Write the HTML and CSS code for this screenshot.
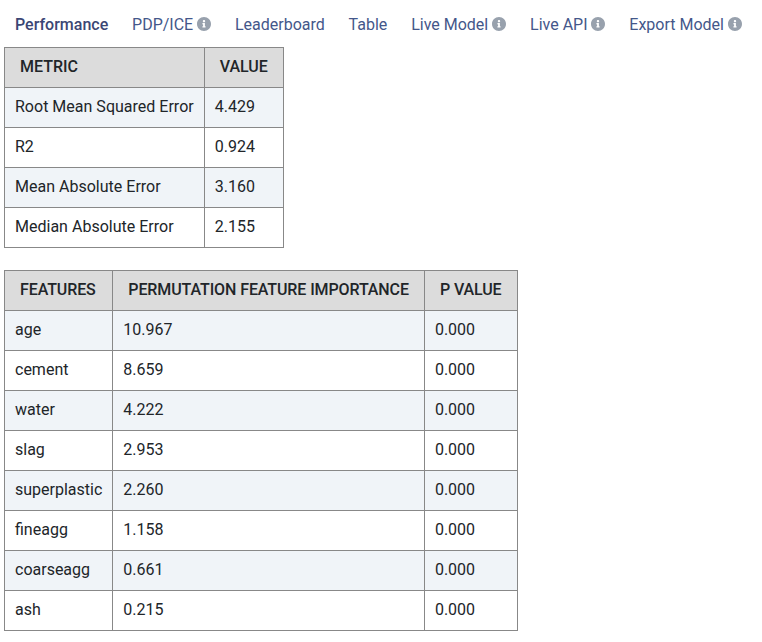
FILE: index.html
```html
<!DOCTYPE html>
<html>
<head>
    <title>Performance</title>
    <link rel="stylesheet" href="styles.css">
</head>
<body>
    <svg class="defs" width="0" height="0">
        <symbol id="info" viewBox="8 8 496 496">
            <path d="M256 8C119 8 8 119 8 256s111 248 248 248 248-111 248-248S393 8 256 8zm0 110c23 0 42 19 42 42s-19 42-42 42-42-19-42-42 19-42 42-42zm56 254c0 7-5 12-12 12h-88c-7 0-12-5-12-12v-24c0-7 5-12 12-12h12v-64h-12c-7 0-12-5-12-12v-24c0-7 5-12 12-12h64c7 0 12 5 12 12v100h12c7 0 12 5 12 12v24z"/>
        </symbol>
    </svg>
    <ul class="tabs">
        <li class="tab active">Performance</li>
        <li class="tab">PDP/ICE <svg class="info"><use href="#info"/></svg></li>
        <li class="tab">Leaderboard</li>
        <li class="tab">Table</li>
        <li class="tab">Live Model <svg class="info"><use href="#info"/></svg></li>
        <li class="tab">Live API <svg class="info"><use href="#info"/></svg></li>
        <li class="tab">Export Model <svg class="info"><use href="#info"/></svg></li>
    </ul>

    <table class="metrics">
        <tr><th>METRIC</th><th>VALUE</th></tr>
        <tr><td>Root Mean Squared Error</td><td>4.429</td></tr>
        <tr><td>R2</td><td>0.924</td></tr>
        <tr><td>Mean Absolute Error</td><td>3.160</td></tr>
        <tr><td>Median Absolute Error</td><td>2.155</td></tr>
    </table>

    <table class="features">
        <tr><th>FEATURES</th><th>PERMUTATION FEATURE IMPORTANCE</th><th>P VALUE</th></tr>
        <tr><td>age</td><td>10.967</td><td>0.000</td></tr>
        <tr><td>cement</td><td>8.659</td><td>0.000</td></tr>
        <tr><td>water</td><td>4.222</td><td>0.000</td></tr>
        <tr><td>slag</td><td>2.953</td><td>0.000</td></tr>
        <tr><td>superplastic</td><td>2.260</td><td>0.000</td></tr>
        <tr><td>fineagg</td><td>1.158</td><td>0.000</td></tr>
        <tr><td>coarseagg</td><td>0.661</td><td>0.000</td></tr>
        <tr><td>ash</td><td>0.215</td><td>0.000</td></tr>
    </table>
</body>
</html>
```

FILE: styles.css
```css
body {
    margin: 0;
    padding: 0 4px;
    font-family: Roboto, sans-serif;
    font-size: 16px;
    color: #212529;
    background: #fff;
}
.defs {
    position: absolute;
}
.tabs {
    display: flex;
    gap: 23.8px;
    list-style: none;
    margin: 0;
    padding: 15px 11px 0;
    height: 32px;
}
.tab {
    color: #44578a;
    line-height: 19px;
    white-space: nowrap;
}
.tab.active {
    color: #3b4674;
    font-weight: 500;
}
.info {
    width: 14px;
    height: 14px;
    fill: #98a1ad;
    vertical-align: -1px;
}
table {
    border-collapse: collapse;
    margin-bottom: 22px;
}
th, td {
    border: 1px solid #888;
    height: 37px;
    padding: 0 10px 2px;
    text-align: left;
}
th {
    background: #dcdcdc;
    font-weight: 500;
    padding: 0 15px 2px;
}
tr:nth-child(even) td {
    background: #f0f4f8;
}
.metrics td {
    letter-spacing: 0.01px;
}
.features th {
    letter-spacing: -0.1px;
}
```
